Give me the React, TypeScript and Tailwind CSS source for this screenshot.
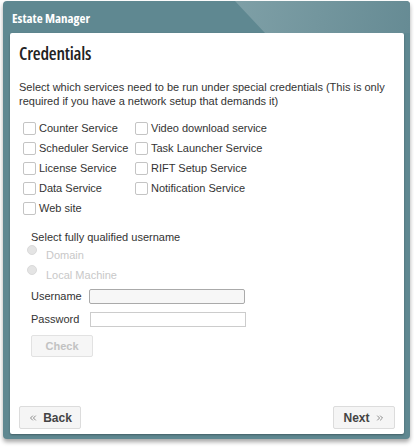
import { ChevronsLeft, ChevronsRight } from 'lucide-react';

const left = ['Counter Service', 'Scheduler Service', 'License Service', 'Data Service', 'Web site'];
const right = ['Video download service', 'Task Launcher Service', 'RIFT Setup Service', 'Notification Service'];

function Check({ label }: { label: string }) {
  return (
    <label className="flex items-center h-[20px] gap-[3px] whitespace-nowrap">
      <span className="w-[13px] h-[13px] border border-[#c4c4c4] rounded-[2px] bg-white shrink-0" />
      <span>{label}</span>
    </label>
  );
}

export default function App() {
  return (
    <div className="w-[414px] h-[447px] bg-white pt-[1px] pl-[3px] font-['Liberation_Sans',Arial,sans-serif] text-[11px] text-[#333]">
      <div className="w-[407px] h-[438px] rounded-[4px] bg-[#5f8891] shadow-[0_3px_4px_rgba(0,0,0,0.35)] flex flex-col overflow-hidden">
        {/* title bar */}
        <div className="relative h-[32px] shrink-0">
          <div className="absolute inset-0 bg-[linear-gradient(100deg,#9ab7bd_0,#7fa0a7_55%,#668b94_100%)] [clip-path:polygon(232px_0,100%_0,100%_100%,262px_100%)]" />
          <div className="relative pl-[9px] pt-[8px] text-white font-bold text-[13px] font-['Open_Sans',sans-serif] [font-stretch:condensed]">
            Estate Manager
          </div>
        </div>

        {/* panel */}
        <div className="flex-1 ml-[7px] mr-[6px] mb-[5px] bg-white rounded-[2px] shadow-[0_1px_2px_rgba(0,0,0,0.3)] flex flex-col px-[9px] pt-[9px] pb-[5px]">
          <h1 className="font-['Open_Sans',sans-serif] font-semibold text-[18px] text-[#222] leading-[22px] tracking-[-0.2px] [font-stretch:condensed]">
            Credentials
          </h1>

          <p className="mt-[16px] leading-[14px]">
            Select which services need to be run under special credentials (This is only required if you have a network setup that demands it)
          </p>

          <div className="mt-[10px] pl-[4px] flex">
            <div className="flex flex-col w-[112px]">
              {left.map(l => <Check key={l} label={l} />)}
            </div>
            <div className="flex flex-col">
              {right.map(l => <Check key={l} label={l} />)}
            </div>
          </div>

          <div className="mt-[12px] pl-[12px]">
            <div className="leading-[14px]">Select fully qualified username</div>
            <div className="flex flex-col text-[#c8c8c8] -ml-[4px]">
              {['Domain', 'Local Machine'].map(r => (
                <div key={r} className="flex items-start h-[20px] gap-[9px]">
                  <span className="mt-[1px] w-[10px] h-[10px] rounded-full bg-[#e4e4e4] border border-[#dadada]" />
                  <span className="mt-[3px]">{r}</span>
                </div>
              ))}
            </div>
            <div className="flex items-center mt-[1px] h-[23px]">
              <span className="w-[58px]">Username</span>
              <input className="w-[156px] h-[15px] border border-[#aaa] rounded-[2px] bg-[#f7f7f7] outline-none" />
            </div>
            <div className="flex items-center h-[23px]">
              <span className="w-[59px]">Password</span>
              <input type="password" className="w-[156px] h-[15px] border border-[#ccc] bg-white outline-none" />
            </div>
            <button disabled className="mt-[4px] w-[62px] h-[22px] border border-[#e2e2e2] rounded-[2px] bg-[#f6f6f6] text-[#c2c2c2] font-bold">
              Check
            </button>
          </div>

          <div className="mt-auto flex justify-between">
            <button className="w-[62px] h-[23px] border border-[#dcdcdc] rounded-[2px] bg-[#f5f5f5] text-[#444] text-[12px] font-bold flex items-center justify-center gap-[5px]">
              <ChevronsLeft size={10} strokeWidth={2} className="text-[#777]" />
              Back
            </button>
            <button className="w-[62px] h-[23px] border border-[#dcdcdc] rounded-[2px] bg-[#f5f5f5] text-[#444] text-[12px] font-bold flex items-center justify-center gap-[5px]">
              Next
              <ChevronsRight size={10} strokeWidth={2} className="text-[#777]" />
            </button>
          </div>
        </div>
      </div>
    </div>
  );
}
